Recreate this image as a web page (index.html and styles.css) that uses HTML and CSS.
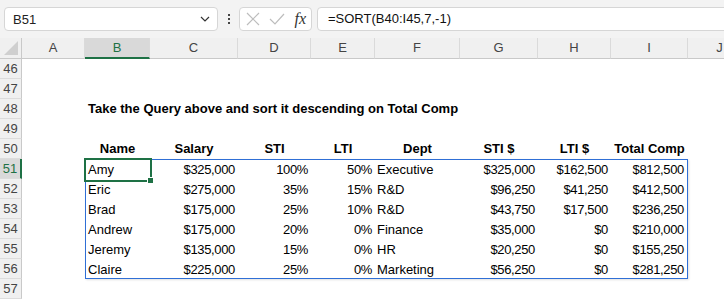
FILE: index.html
```html
<!DOCTYPE html>
<html lang="en">
<head>
    <meta charset="UTF-8">
    <meta name="viewport" content="width=device-width, initial-scale=1.0">
    <title>SORT - Total Comp</title>
    <link rel="stylesheet" href="styles.css">
</head>
<body>

<!-- Barre de formule -->
<div class="toolbar">
    <div class="name-box">
        <span>B51</span>
        <svg class="chevron" width="10" height="6" viewBox="0 0 10 6"><path d="M1 1l4 4 4-4" fill="none" stroke="#333" stroke-width="1.2"/></svg>
    </div>
    <div class="grip"><span></span><span></span><span></span></div>
    <div class="fx-box">
        <svg width="14" height="14" viewBox="0 0 14 14"><path d="M1 1l12 12M13 1L1 13" stroke="#bdbdbd" stroke-width="1.2"/></svg>
        <svg width="16" height="14" viewBox="0 0 16 14"><path d="M1 7l5 5L15 2" fill="none" stroke="#bdbdbd" stroke-width="1.2"/></svg>
        <span class="fx">fx</span>
    </div>
    <div class="formula">=SORT(B40:I45,7,-1)</div>
</div>

<!-- Feuille -->
<div class="sheet">
    <div class="corner"><svg width="14" height="14" viewBox="0 0 14 14"><polygon points="14,0 14,14 0,14" fill="#cfcfcf"/></svg></div>
    <div class="col-head">A</div>
    <div class="col-head current">B</div>
    <div class="col-head">C</div>
    <div class="col-head">D</div>
    <div class="col-head">E</div>
    <div class="col-head">F</div>
    <div class="col-head">G</div>
    <div class="col-head">H</div>
    <div class="col-head">I</div>
    <div class="col-head">J</div>

    <div class="row-head">46</div>
    <div class="cell"></div><div class="cell"></div><div class="cell"></div><div class="cell"></div><div class="cell"></div><div class="cell"></div><div class="cell"></div><div class="cell"></div><div class="cell"></div><div class="cell"></div>

    <div class="row-head">47</div>
    <div class="cell"></div><div class="cell"></div><div class="cell"></div><div class="cell"></div><div class="cell"></div><div class="cell"></div><div class="cell"></div><div class="cell"></div><div class="cell"></div><div class="cell"></div>

    <div class="row-head">48</div>
    <div class="cell"></div>
    <div class="cell title">Take the Query above and sort it descending on Total Comp</div>
    <div class="cell"></div><div class="cell"></div><div class="cell"></div><div class="cell"></div><div class="cell"></div><div class="cell"></div><div class="cell"></div><div class="cell"></div>

    <div class="row-head">49</div>
    <div class="cell"></div><div class="cell"></div><div class="cell"></div><div class="cell"></div><div class="cell"></div><div class="cell"></div><div class="cell"></div><div class="cell"></div><div class="cell"></div><div class="cell"></div>

    <div class="row-head">50</div>
    <div class="cell"></div>
    <div class="cell th">Name</div>
    <div class="cell th">Salary</div>
    <div class="cell th">STI</div>
    <div class="cell th">LTI</div>
    <div class="cell th">Dept</div>
    <div class="cell th">STI $</div>
    <div class="cell th">LTI $</div>
    <div class="cell th">Total Comp</div>
    <div class="cell"></div>

    <!-- Plage de débordement B51:I56 -->
    <div class="spill">
        <div class="txt active">Amy</div><div class="num">$325,000</div><div class="num">100%</div><div class="num">50%</div><div class="txt">Executive</div><div class="num">$325,000</div><div class="num">$162,500</div><div class="num">$812,500</div>
        <div class="txt">Eric</div><div class="num">$275,000</div><div class="num">35%</div><div class="num">15%</div><div class="txt">R&amp;D</div><div class="num">$96,250</div><div class="num">$41,250</div><div class="num">$412,500</div>
        <div class="txt">Brad</div><div class="num">$175,000</div><div class="num">25%</div><div class="num">10%</div><div class="txt">R&amp;D</div><div class="num">$43,750</div><div class="num">$17,500</div><div class="num">$236,250</div>
        <div class="txt">Andrew</div><div class="num">$175,000</div><div class="num">20%</div><div class="num">0%</div><div class="txt">Finance</div><div class="num">$35,000</div><div class="num">$0</div><div class="num">$210,000</div>
        <div class="txt">Jeremy</div><div class="num">$135,000</div><div class="num">15%</div><div class="num">0%</div><div class="txt">HR</div><div class="num">$20,250</div><div class="num">$0</div><div class="num">$155,250</div>
        <div class="txt">Claire</div><div class="num">$225,000</div><div class="num">25%</div><div class="num">0%</div><div class="txt">Marketing</div><div class="num">$56,250</div><div class="num">$0</div><div class="num">$281,250</div>
    </div>

    <div class="row-head current">51</div><div class="cell"></div><div class="cell"></div>
    <div class="row-head">52</div><div class="cell"></div><div class="cell"></div>
    <div class="row-head">53</div><div class="cell"></div><div class="cell"></div>
    <div class="row-head">54</div><div class="cell"></div><div class="cell"></div>
    <div class="row-head">55</div><div class="cell"></div><div class="cell"></div>
    <div class="row-head">56</div><div class="cell"></div><div class="cell"></div>

    <div class="row-head">57</div>
    <div class="cell"></div><div class="cell"></div><div class="cell"></div><div class="cell"></div><div class="cell"></div><div class="cell"></div><div class="cell"></div><div class="cell"></div><div class="cell"></div><div class="cell"></div>
</div>

</body>
</html>
```

FILE: styles.css
```css
body {
    margin: 0;
    width: 724px;
    height: 299px;
    overflow: hidden;
    background-color: #fff;
    font-family: "Liberation Sans", Arial, sans-serif;
    font-size: 13px;
    color: #000;
}
/* Barre de formule */
.toolbar {
    display: flex;
    align-items: center;
    height: 38px;
    padding-left: 4px;
    background-color: #f3f3f3;
}
.name-box {
    display: flex;
    align-items: center;
    justify-content: space-between;
    box-sizing: border-box;
    width: 214px;
    height: 24px;
    padding: 0 7px 0 8px;
    background-color: #fff;
    border: 1px solid #d6d6d6;
    border-radius: 4px;
    font-size: 13px;
    color: #222;
}
.grip {
    display: flex;
    flex-direction: column;
    align-items: center;
    gap: 2px;
    width: 21px;
}
.grip span {
    width: 2px;
    height: 2px;
    background-color: #444;
}
.fx-box {
    display: flex;
    align-items: center;
    justify-content: space-between;
    box-sizing: border-box;
    width: 73px;
    height: 24px;
    padding: 0 5px 0 6px;
    background-color: #fff;
    border: 1px solid #d6d6d6;
    border-radius: 4px;
}
.fx {
    font-family: "Liberation Serif", "Times New Roman", serif;
    font-style: italic;
    font-size: 16px;
    color: #333;
}
.formula {
    flex: 1;
    box-sizing: border-box;
    height: 24px;
    line-height: 22px;
    margin-left: 5px;
    margin-right: -10px;
    padding-left: 10px;
    background-color: #fff;
    border: 1px solid #d6d6d6;
    border-radius: 4px;
    color: #111;
}
/* Grille */
.sheet {
    display: grid;
    grid-template-columns: 22px 63px 65px 88px 73px 64px 85px 78px 73px 77px 64px;
    grid-template-rows: 21px repeat(12, 20px);
}
.corner, .col-head {
    box-sizing: border-box;
    background-color: #f0f0f0;
    border-bottom: 1px solid #c9c9c9;
}
.corner {
    display: flex;
    align-items: flex-end;
    justify-content: flex-end;
    padding: 0 3px 3px 0;
    border-right: 1px solid #c9c9c9;
}
.col-head {
    border-right: 1px solid #dadada;
    text-align: center;
    line-height: 20px;
    color: #444;
}
.col-head.current {
    background-color: #d9d9d9;
    border-bottom: 2px solid #1e7145;
    color: #1e7145;
}
.row-head {
    box-sizing: border-box;
    background-color: #f0f0f0;
    border-right: 1px solid #c9c9c9;
    border-bottom: 1px solid #dcdcdc;
    text-align: center;
    line-height: 19px;
    color: #444;
}
.row-head.current {
    background-color: #d9d9d9;
    border-right: 2px solid #1e7145;
    color: #1e7145;
}
.cell {
    line-height: 20px;
    white-space: nowrap;
}
.title {
    padding-left: 3px;
    font-weight: bold;
}
.th {
    font-weight: bold;
    text-align: center;
}
/* Tableau trié */
.spill {
    grid-column: 3 / 11;
    grid-row: 7 / 13;
    display: grid;
    grid-template-columns: 64px 88px 73px 64px 85px 78px 73px 76px;
    grid-auto-rows: 20px;
    border: 1px solid #2f6fd6;
    box-shadow: 1px 1px 2px rgba(0, 0, 0, 0.12);
    line-height: 20px;
    white-space: nowrap;
}
.txt {
    padding-left: 2px;
}
.num {
    padding-right: 3px;
    text-align: right;
    letter-spacing: -0.35px;
}
.active {
    position: relative;
    outline: 2px solid #1e7145;
    outline-offset: 0;
}
.active::after {
    content: "";
    position: absolute;
    right: -4px;
    bottom: -4px;
    width: 5px;
    height: 5px;
    background-color: #1e7145;
    border: 1px solid #fff;
}
```
